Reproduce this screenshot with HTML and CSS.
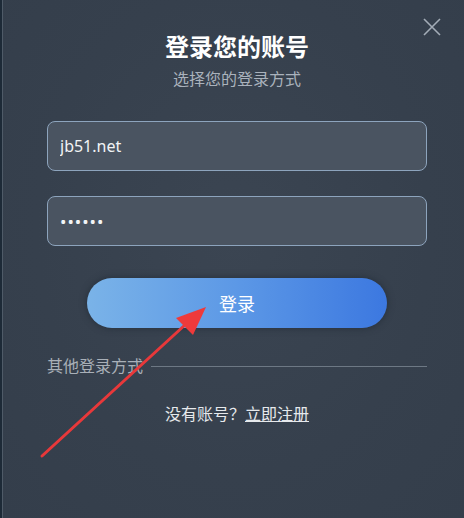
FILE: index.html
```html
<!DOCTYPE html>
<html lang="zh-CN">
<head>
  <meta charset="UTF-8">
  <meta name="viewport" content="width=device-width, initial-scale=1.0">
  <title>登录您的账号</title>
  <link rel="stylesheet" href="styles.css">
</head>
<body>
  <div class="dialog">
    <button class="close" aria-label="关闭">
      <svg width="18" height="18" viewBox="0 0 18 18"><path d="M1 1L17 17M17 1L1 17" stroke="#a3acb7" stroke-width="1.6" fill="none"/></svg>
    </button>
    <h1>登录您的账号</h1>
    <p class="subtitle">选择您的登录方式</p>
    <input class="field" type="text" value="jb51.net">
    <input class="field" type="password" value="123456">
    <button class="login">登录</button>
    <div class="divider">
      <span>其他登录方式</span>
      <div class="line"></div>
    </div>
    <p class="footer">没有账号？<a href="#">立即注册</a></p>

    <svg class="arrow" width="464" height="518" viewBox="0 0 464 518">
      <line x1="42" y1="456" x2="186" y2="324" stroke="#e8383a" stroke-width="3" stroke-linecap="round"/>
      <polygon points="206,307 176,318 193,335" fill="#ee3a3b"/>
    </svg>
  </div>
</body>
</html>
```

FILE: styles.css
```css
body {
  margin: 0;
  padding: 0;
  font-family: "Noto Sans", "Noto Sans CJK SC", sans-serif;
  background: #36404d;
}
.dialog {
  position: relative;
  box-sizing: border-box;
  height: 518px;
  padding: 31px 37px 0 45px;
  background: radial-gradient(ellipse at 50% 45%, #3b4552 0%, #36404d 60%, #343e4b 100%);
  border-left: 2px solid #1d2a37;
  box-shadow: inset 1px 0 0 #4f5b68;
  overflow: hidden;
}
h1 {
  margin: 0;
  text-align: center;
  font-size: 24px;
  line-height: 32px;
  font-weight: bold;
  color: #ffffff;
}
.subtitle {
  margin: 6px 0 0;
  text-align: center;
  font-size: 16px;
  line-height: 20px;
  color: #aab2bc;
}
.close {
  position: absolute;
  top: 18px;
  right: 23px;
  padding: 0;
  border: none;
  background: none;
  cursor: pointer;
}
.field {
  display: block;
  box-sizing: border-box;
  width: 100%;
  height: 50px;
  margin-top: 32px;
  padding: 0 12px;
  border: 1px solid #8da4bd;
  border-radius: 8px;
  background: #4a5461;
  color: #f2f4f6;
  font-family: inherit;
  font-size: 16px;
  outline: none;
}
.field + .field {
  margin-top: 25px;
}
.field[type="password"] {
  letter-spacing: 1px;
  font-size: 17px;
}
.login {
  display: block;
  width: 300px;
  height: 50px;
  margin: 32px auto 0;
  border: none;
  border-radius: 25px;
  background: linear-gradient(90deg, #7ab3e8 0%, #5c98e6 50%, #3c78e0 100%);
  color: #ffffff;
  font-family: inherit;
  font-size: 18px;
  box-shadow: 0 0 6px 1px #29333f;
  cursor: pointer;
}
.divider {
  display: flex;
  align-items: center;
  margin-top: 28px;
  font-size: 16px;
  line-height: 20px;
  color: #a9b0b8;
}
.divider .line {
  flex: 1;
  height: 1px;
  margin-left: 8px;
  background: #6d7884;
}
.footer {
  margin: 27px 0 0;
  text-align: center;
  font-size: 16px;
  line-height: 22px;
  color: #e6e9ec;
}
.footer a {
  color: #e6e9ec;
  text-decoration: underline;
}
.arrow {
  position: absolute;
  left: -2px;
  top: 0;
  pointer-events: none;
}
```
